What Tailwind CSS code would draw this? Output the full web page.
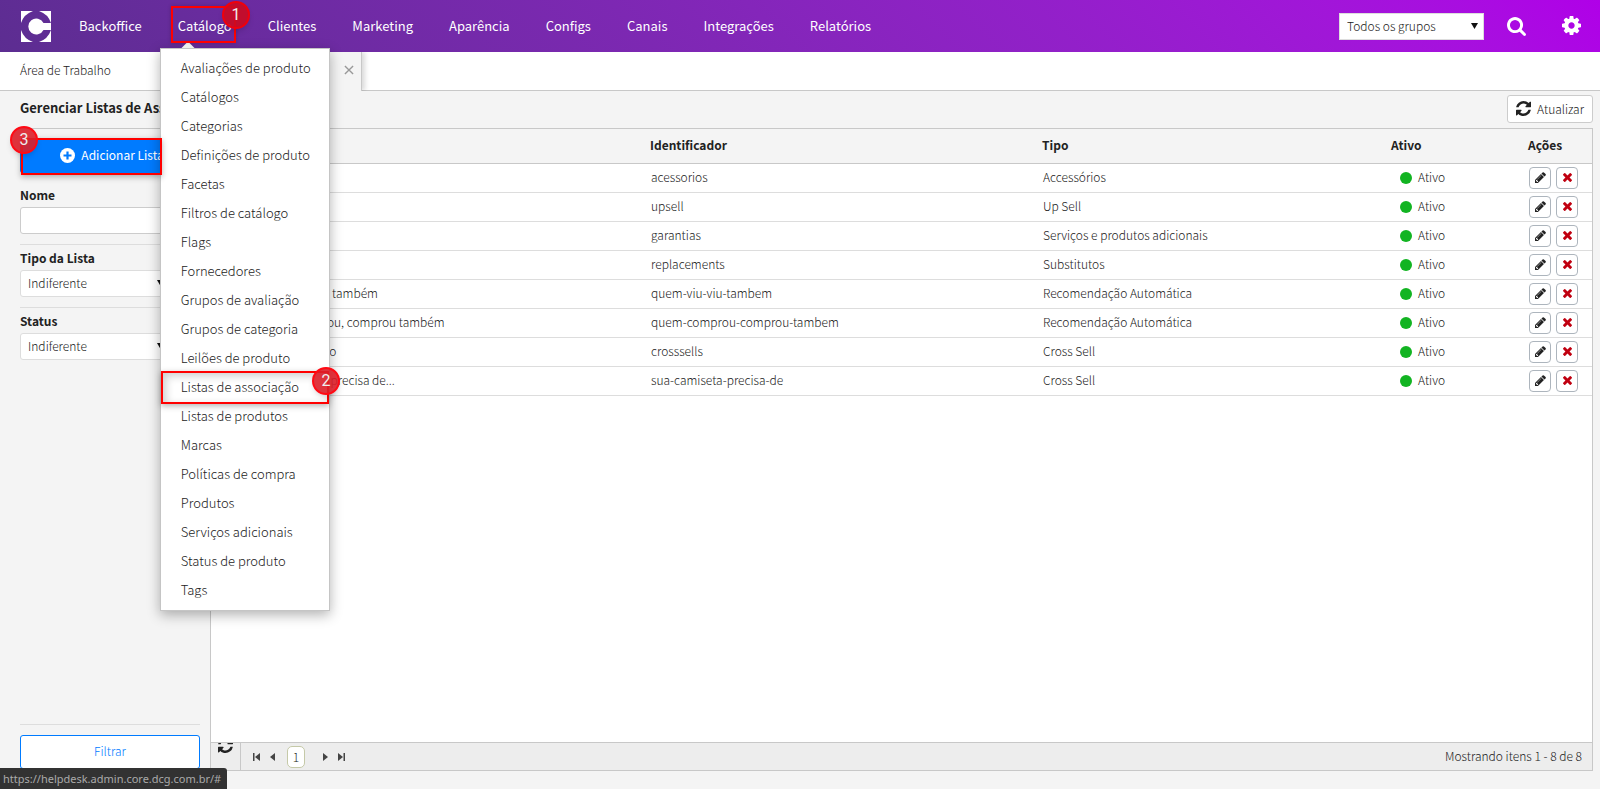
<!DOCTYPE html>
<html lang="pt-BR">
<head>
  <meta charset="UTF-8">
  <meta name="viewport" content="width=device-width, initial-scale=1.0">
  <title>Listas de Associação</title>
  <script src="https://cdn.jsdelivr.net/npm/@tailwindcss/browser@4"></script>
</head>
<body class="relative h-screen flex flex-col overflow-hidden bg-[#f4f4f4] text-[#222] text-[12px] leading-5 font-['Noto_Sans_CJK_SC','Noto_Sans',sans-serif] font-light">

  <!-- icons -->
  <svg class="hidden" aria-hidden="true">
    <symbol id="refresh" viewBox="0 0 1536 1536"><path d="M1511 928q0 5-1 7-64 268-268 434.500T764 1536q-146 0-282.500-55T238 1324l-129 129q-19 19-45 19t-45-19-19-45V960q0-26 19-45t45-19h448q26 0 45 19t19 45-19 45l-137 137q71 66 161 102t187 36q134 0 250-65t186-179q11-17 53-117 8-23 30-23h192q13 0 22.500 9.500t9.500 22.500zM1536 128v448q0 26-19 45t-45 19h-448q-26 0-45-19t-19-45 19-45l138-138Q969 256 768 256q-134 0-250 65T332 500q-11 17-53 117-8 23-30 23H50q-13 0-22.500-9.500T18 608v-7q65-268 270-434.500T768 0q146 0 284 55.500T1297 212l130-129q19-19 45-19t45 19 19 45z"/></symbol>
    <symbol id="pencil" viewBox="0 0 1536 1536"><path d="M363 1408l91-91-235-235-91 91v107h128v128h107zM886 480q0-22-22-22-10 0-17 7l-542 542q-7 7-7 17 0 22 22 22 10 0 17-7l542-542q7-7 7-17zm-54-192l416 416-832 832H0v-416zm683 96q0 53-37 90l-166 166-416-416 166-165q36-38 90-38 53 0 91 38l235 234q37 39 37 91z"/></symbol>
    <symbol id="times" viewBox="0 0 1188 1188"><path d="M1188 956q0 40-28 68l-136 136q-28 28-68 28t-68-28L594 866l-294 294q-28 28-68 28t-68-28L28 1024Q0 996 0 956t28-68l294-294L28 300Q0 272 0 232t28-68L164 28q28-28 68-28t68 28l294 294L888 28q28-28 68-28t68 28l136 136q28 28 28 68t-28 68L866 594l294 294q28 28 28 68z"/></symbol>
    <symbol id="search" viewBox="0 0 1664 1664"><path d="M1152 704q0-185-131.500-316.500T704 256 387.500 387.500 256 704t131.500 316.500T704 1152t316.500-131.500T1152 704zm512 832q0 52-38 90t-90 38q-54 0-90-38l-343-342q-179 124-399 124-143 0-273.500-55.500t-225-150-150-225T0 704t55.500-273.500 150-225 225-150T704 0t273.500 55.500 225 150 150 225T1408 704q0 220-124 399l343 343q37 37 37 90z"/></symbol>
    <symbol id="cog" viewBox="0 0 1536 1536"><path d="M1024 768q0-106-75-181t-181-75-181 75-75 181 75 181 181 75 181-75 75-181zm512-109v222q0 12-8 23t-20 13l-185 28q-19 54-39 91 35 50 107 138 10 12 10 25t-9 23q-27 37-99 108t-94 71q-12 0-26-9l-138-108q-44 23-91 38-16 136-29 186-7 28-36 28H657q-14 0-24.500-8.500T621 1506l-28-184q-49-16-90-37l-141 107q-10 9-25 9-14 0-25-11-126-114-165-168-7-10-7-23 0-12 8-23 15-21 51-66.500t54-70.500q-27-50-41-99L29 913q-13-2-21-12.500T0 877V655q0-12 8-23t19-13l186-28q14-46 39-92-40-57-107-138-10-12-10-24 0-10 9-23 26-36 98.500-107.500T337 135q13 0 26 10l138 107q44-23 91-38 16-136 29-186 7-28 36-28h222q14 0 24.500 8.500T915 30l28 184q49 16 90 37l142-107q9-9 24-9 13 0 25 10 129 119 165 170 7 8 7 22 0 12-8 23-15 21-51 66.500t-54 70.500q26 50 41 98l183 28q13 2 21 12.500t8 23.500z"/></symbol>
  </svg>

  <header class="h-[52px] shrink-0 flex items-center pl-5 pr-[19px] bg-linear-45 from-[#5c2d91] to-[#b000e8] text-white">
    <a href="#" aria-label="Início" class="mr-[10px]">
      <svg class="size-[31px]" viewBox="0 0 31 31" fill="#fff">
        <path d="M1 0h12Q4 3 1 12zM31 0H19q9 3 12 12zM1 31h12Q4 28 1 19zM31 31H19q9-3 12-12z"/>
        <path d="M31 12H23.500A8 8 0 1 0 23.500 19H31z"/>
      </svg>
    </a>
    <nav class="relative z-20 h-full">
      <ul class="flex items-center h-full text-[13px] font-normal">
        <li><a href="#" class="px-[18px]">Backoffice</a></li>
        <li class="relative h-full flex items-center">
          <a href="#" class="px-[18px]">Catálogo</a>
          <div class="absolute left-[22px] top-[44px] size-3 rotate-45 bg-white"></div>
          <ul id="menu" class="absolute left-0 top-12 w-[170px] pt-1 pb-[6px] bg-white border border-[#c5c5c5] shadow-[0_4px_12px_rgba(0,0,0,0.3)] text-[#222] font-light"></ul>
        </li>
        <li><a href="#" class="px-[18px]">Clientes</a></li>
        <li><a href="#" class="px-[18px]">Marketing</a></li>
        <li><a href="#" class="px-[18px]">Aparência</a></li>
        <li><a href="#" class="px-[18px]">Configs</a></li>
        <li><a href="#" class="px-[18px]">Canais</a></li>
        <li><a href="#" class="px-[18px]">Integrações</a></li>
        <li><a href="#" class="px-[18px]">Relatórios</a></li>
      </ul>
    </nav>
    <div class="relative ml-auto">
      <select aria-label="Grupos" class="appearance-none block w-[145px] h-[27px] pl-[7px] bg-white border border-[#ddd] text-[#222]">
        <option>Todos os grupos</option>
      </select>
      <svg class="absolute right-[6px] top-[10px] w-[7px] h-[6px] pointer-events-none" viewBox="0 0 7 6"><path d="M0 0h7L3.500 6z" fill="#111"/></svg>
    </div>
    <button aria-label="Buscar" class="ml-[23px]"><svg class="size-[19px]" fill="#fff"><use href="#search"/></svg></button>
    <button aria-label="Configurações" class="ml-[36px] pb-[2px]"><svg class="size-[19px]" fill="#fff"><use href="#cog"/></svg></button>
  </header>

  <div class="h-[39px] shrink-0 flex bg-white border-b border-[#c8c8c8]">
    <a href="#" class="w-[170px] pl-5 leading-9">Área de Trabalho</a>
    <div class="w-[192px] h-[39px] flex items-center justify-end gap-5 pr-[7px] bg-[#f4f4f4] border-r border-[#c8c8c8] shadow-[3px_0_5px_rgba(0,0,0,0.15)] [clip-path:inset(0_-8px_0_0)]">
      <a href="#">Listas de Associação</a>
      <button aria-label="Fechar" class="pb-1">
        <svg class="size-[10px]" viewBox="0 0 11 11" stroke="#999" stroke-width="1.500"><path d="M1 1l9 9M10 1l-9 9"/></svg>
      </button>
    </div>
  </div>

  <div class="h-[37px] shrink-0 flex items-center justify-between pl-5 pr-[7px] pb-[2px]">
    <h1 class="pb-px text-[13px] font-bold">Gerenciar Listas de Associação</h1>
    <button class="flex items-center gap-[6px] h-7 px-2 bg-white border border-[#ccc] rounded-[3px]">
      <svg class="size-[15px]" fill="#222"><use href="#refresh"/></svg>Atualizar
    </button>
  </div>

  <main class="flex-1 min-h-0 flex">
    <aside class="w-[210px] shrink-0 flex flex-col pl-5 pr-[10px] pb-5">
      <div class="border-t border-[#c8c8c8] pt-[10px]">
        <button class="w-full h-[34px] pb-[2px] pl-1 flex items-center justify-center gap-[6px] bg-[#007bff] text-white font-normal rounded-[3px]">
          <svg class="size-[15px]" viewBox="0 0 15 15"><circle cx="7.500" cy="7.500" r="7.500" fill="#fff"/><path d="M7.500 3.500v8M3.500 7.500h8" stroke="#007bff" stroke-width="2.200"/></svg>
          Adicionar Lista
        </button>
      </div>
      <div class="pt-3 pb-[10px] border-b border-[#ddd]">
        <label for="nome" class="block font-bold">Nome</label>
        <input id="nome" type="text" class="mt-[2px] block w-full h-[27px] px-2 bg-white border border-[#ccc] rounded-[3px]">
      </div>
      <div class="pt-[3px] pb-[10px] border-b border-[#ddd]">
        <label for="tipo" class="block font-bold">Tipo da Lista</label>
        <div class="relative mt-[2px]">
          <select id="tipo" class="appearance-none block w-full h-[27px] pl-[7px] pb-[2px] bg-white border border-[#ddd] rounded-[3px]"><option>Indiferente</option></select>
          <svg class="absolute right-9 top-[10px] w-[7px] h-[6px] pointer-events-none" viewBox="0 0 7 6"><path d="M0 0h7L3.500 6z" fill="#111"/></svg>
        </div>
      </div>
      <div class="pt-[3px]">
        <label for="status" class="block font-bold">Status</label>
        <div class="relative mt-[2px]">
          <select id="status" class="appearance-none block w-full h-[27px] pl-[7px] pb-[2px] bg-white border border-[#ddd] rounded-[3px]"><option>Indiferente</option></select>
          <svg class="absolute right-9 top-[10px] w-[7px] h-[6px] pointer-events-none" viewBox="0 0 7 6"><path d="M0 0h7L3.500 6z" fill="#111"/></svg>
        </div>
      </div>
      <div class="mt-auto pt-[10px] border-t border-[#ddd]">
        <button class="w-full h-[34px] pb-[2px] bg-white border border-[#007bff] rounded-[3px] text-[#007bff]">Filtrar</button>
      </div>
    </aside>

    <section class="flex-1 min-w-0 flex flex-col mr-[7px] mb-[18px] bg-white border border-[#c8c8c8]">
      <table class="w-full table-fixed border-collapse">
        <thead class="bg-[#f4f4f4] text-left">
          <tr class="h-[34px] border-b border-[#c8c8c8]">
            <th class="pl-[45px] pb-[2px] font-bold">Nome</th>
            <th class="w-[392px] px-[10px] pb-[2px] font-bold">Identificador</th>
            <th class="w-[349px] px-[10px] pb-[2px] font-bold">Tipo</th>
            <th class="w-[137px] px-[10px] pb-[2px] font-bold">Ativo</th>
            <th class="w-[74px] px-[10px] pb-[2px] font-bold">Ações</th>
          </tr>
        </thead>
        <tbody id="rows"></tbody>
      </table>
      <footer class="mt-auto h-7 flex items-center bg-[#ededed] border-t border-[#c8c8c8]">
        <button aria-label="Recarregar" class="w-[30px] h-full flex justify-center overflow-hidden border-r border-[#c8c8c8]"><svg class="size-[15px] -mt-[5px]" fill="#222"><use href="#refresh"/></svg></button>
        <button aria-label="Primeira" class="ml-3"><svg class="w-[7px] h-2" viewBox="0 0 7 8" fill="#444"><path d="M0 0h1.500v8H0zM7 0v8L2 4z"/></svg></button>
        <button aria-label="Anterior" class="ml-[10px]"><svg class="w-[5px] h-2" viewBox="0 0 5 8" fill="#444"><path d="M5 0v8L0 4z"/></svg></button>
        <button class="ml-3 w-[18px] h-[22px] pb-[2px] bg-white border border-[#c5c9a8] rounded-[5px]">1</button>
        <button aria-label="Próxima" class="ml-[18px]"><svg class="w-[5px] h-2" viewBox="0 0 5 8" fill="#444"><path d="M0 0v8l5-4z"/></svg></button>
        <button aria-label="Última" class="ml-[10px]"><svg class="w-[7px] h-2" viewBox="0 0 7 8" fill="#444"><path d="M5.500 0H7v8H5.500zM0 0v8l5-4z"/></svg></button>
        <span class="ml-auto pr-[10px] pb-[2px]">Mostrando itens 1 - 8 de 8</span>
      </footer>
    </section>
  </main>

  <!-- step markers -->
  <div class="absolute z-30 left-[171px] top-[6px] w-[65px] h-[37px] border-2 border-[#f00] shadow-[0_0_4px_rgba(0,0,0,0.2)]"></div>
  <div class="absolute z-30 left-[222px] top-[1px] size-7 rounded-full border-2 border-[#f0000c] bg-[#cc0a20]/90 shadow-md text-[#eee] text-[16px] leading-6 text-center font-['Roboto',sans-serif] font-normal">1</div>
  <div class="absolute z-30 left-[161px] top-[371px] w-[168px] h-[33px] border-2 border-[#f00] shadow-[0_2px_6px_rgba(0,0,0,0.3),inset_3px_3px_8px_rgba(0,0,0,0.2)]"></div>
  <div class="absolute z-30 left-[312px] top-[367px] size-7 rounded-full border-2 border-[#ff0a14] bg-[#dc1e28]/90 shadow-md text-[#eee] text-[16px] leading-6 text-center font-['Roboto',sans-serif] font-normal">2</div>
  <div class="absolute z-30 left-[21px] top-[138px] w-[141px] h-[37px] border-2 border-[#f00] shadow-[0_2px_6px_rgba(0,0,0,0.3)]"></div>
  <div class="absolute z-30 left-[10px] top-[126px] size-7 rounded-full border-2 border-[#ff0a14] bg-[#dc1e28]/90 shadow-md text-[#eee] text-[16px] leading-6 text-center font-['Roboto',sans-serif] font-normal">3</div>

  <div class="absolute z-30 left-0 bottom-0 h-[21px] w-[227px] px-[3px] bg-[#323232] rounded-tr-[3px] text-[#aaa] text-[11px] leading-[21px] font-['Noto_Sans',sans-serif] font-normal">https://helpdesk.admin.core.dcg.com.br/#</div>

  <script>
    const menu = ['Avaliações de produto', 'Catálogos', 'Categorias', 'Definições de produto', 'Facetas', 'Filtros de catálogo', 'Flags', 'Fornecedores', 'Grupos de avaliação', 'Grupos de categoria', 'Leilões de produto', 'Listas de associação', 'Listas de produtos', 'Marcas', 'Políticas de compra', 'Produtos', 'Serviços adicionais', 'Status de produto', 'Tags'];
    document.getElementById('menu').innerHTML = menu.map(m =>
      `<li><a href="#" class="block h-[29px] pl-5 leading-[29px] whitespace-nowrap">${m}</a></li>`).join('');

    const rows = [
      ['Acessórios', 'acessorios', 'Accessórios'],
      ['Up Sell', 'upsell', 'Up Sell'],
      ['Garantias', 'garantias', 'Serviços e produtos adicionais'],
      ['Substitutos', 'replacements', 'Substitutos'],
      ['Quem viu, viu também', 'quem-viu-viu-tambem', 'Recomendação Automática'],
      ['Quem comprou, comprou também', 'quem-comprou-comprou-tambem', 'Recomendação Automática'],
      ['Produto ligado', 'crosssells', 'Cross Sell'],
      ['Sua camiseta precisa de...', 'sua-camiseta-precisa-de', 'Cross Sell']
    ];
    document.getElementById('rows').innerHTML = rows.map(r => `
      <tr class="h-[29px] border-b border-[#ddd]">
        <td class="pl-[45px] pb-[2px]">${r[0]}</td>
        <td class="px-[11px] pb-[2px]">${r[1]}</td>
        <td class="px-[11px] pb-[2px]">${r[2]}</td>
        <td class="pl-[19px]"><span class="flex items-center gap-[6px]"><i class="size-3 rounded-full bg-[#12b422]"></i><span class="pb-[2px]">Ativo</span></span></td>
        <td class="pl-[11px]"><div class="flex gap-[5px]">
          <button aria-label="Editar" class="size-[22px] flex items-center justify-center bg-white border border-[#adb5bd] rounded-[4px]"><svg class="size-[11px]" fill="#222"><use href="#pencil"/></svg></button>
          <button aria-label="Excluir" class="size-[22px] flex items-center justify-center bg-white border border-[#adb5bd] rounded-[4px]"><svg class="size-[9px]" fill="#c00010"><use href="#times"/></svg></button>
        </div></td>
      </tr>`).join('');
  </script>
</body>
</html>
